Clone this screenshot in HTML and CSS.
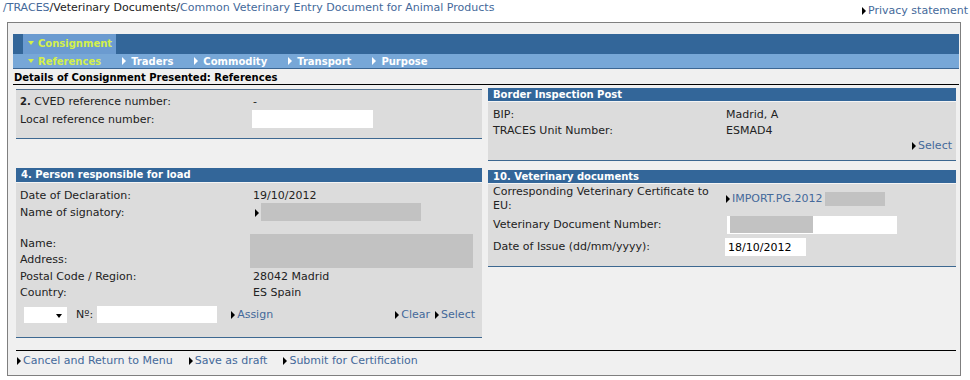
FILE: index.html
```html
<!DOCTYPE html>
<html lang="en">
<head>
    <meta charset="UTF-8">
    <title>Common Veterinary Entry Document for Animal Products</title>
    <link rel="stylesheet" href="styles.css">
</head>
<body>
<div class="top">
    <div class="crumbs"><a class="lnk">/TRACES</a>/Veterinary Documents/<a class="lnk">Common Veterinary Entry Document for Animal Products</a></div>
    <a class="go priv">Privacy statement</a>
</div>

<div class="frame">
    <div class="menu">
        <span class="tab"><i class="down"></i>Consignment</span>
    </div>
    <div class="submenu">
        <span class="sub on"><i class="down"></i>References</span>
        <span class="sub"><i class="right"></i>Traders</span>
        <span class="sub"><i class="right"></i>Commodity</span>
        <span class="sub"><i class="right"></i>Transport</span>
        <span class="sub"><i class="right"></i>Purpose</span>
    </div>
    <div class="title">Details of Consignment Presented: References</div>

    <div class="cols">
        <div class="col">
            <div class="panel refs">
                <div class="body">
                    <div class="row"><span class="lbl"><b>2.</b> CVED reference number:</span><span class="val">-</span></div>
                    <div class="row"><span class="lbl">Local reference number:</span><span class="val"><span class="inp w120"></span></span></div>
                </div>
            </div>

            <div class="panel person">
                <div class="head">4. Person responsible for load</div>
                <div class="body">
                    <div class="row"><span class="lbl">Date of Declaration:</span><span class="val">19/10/2012</span></div>
                    <div class="row sig"><span class="lbl">Name of signatory:</span><span class="val"><a class="go"></a><span class="blur w160"></span></span></div>
                    <div class="pair">
                        <div class="lbls">
                            <div class="row"><span class="lbl">Name:</span></div>
                            <div class="row"><span class="lbl">Address:</span></div>
                        </div>
                        <span class="blur addr"></span>
                    </div>
                    <div class="row"><span class="lbl">Postal Code / Region:</span><span class="val">28042 Madrid</span></div>
                    <div class="row"><span class="lbl">Country:</span><span class="val">ES Spain</span></div>
                    <div class="tools">
                        <span class="select"><i class="caret"></i></span>
                        <span class="no">Nº:</span>
                        <span class="inp w120"></span>
                        <a class="go assign">Assign</a>
                        <a class="go push">Clear</a>
                        <a class="go">Select</a>
                    </div>
                </div>
            </div>
        </div>

        <div class="col">
            <div class="panel bip">
                <div class="head">Border Inspection Post</div>
                <div class="body">
                    <div class="row"><span class="lbl">BIP:</span><span class="val">Madrid, A</span></div>
                    <div class="row"><span class="lbl">TRACES Unit Number:</span><span class="val">ESMAD4</span></div>
                    <div class="row end"><a class="go">Select</a></div>
                </div>
            </div>

            <div class="panel vet">
                <div class="head">10. Veterinary documents</div>
                <div class="body">
                    <div class="row cert"><span class="lbl">Corresponding Veterinary Certificate to EU:</span><span class="val"><a class="go">IMPORT.PG.2012</a><span class="blur w60"></span></span></div>
                    <div class="row"><span class="lbl">Veterinary Document Number:</span><span class="val"><span class="inp w170"><span class="blur w84"></span></span></span></div>
                    <div class="row"><span class="lbl">Date of Issue (dd/mm/yyyy):</span><span class="val"><span class="inp w81">18/10/2012</span></span></div>
                </div>
            </div>
        </div>
    </div>

    <div class="foot">
        <a class="go">Cancel and Return to Menu</a>
        <a class="go">Save as draft</a>
        <a class="go">Submit for Certification</a>
    </div>
</div>
</body>
</html>
```

FILE: styles.css
```css
* {
    box-sizing: border-box;
}

body {
    margin: 0;
    background: #fff;
    color: #222;
    font: 11px "DejaVu Sans", Verdana, sans-serif;
}

b {
    font-size: 10px;
}

.lnk,
.go {
    color: #44699a;
    text-decoration: none;
}

/* small black arrow in front of every action link */
.go::before {
    content: "";
    display: inline-block;
    border-left: 4px solid #000;
    border-top: 4px solid transparent;
    border-bottom: 4px solid transparent;
    margin-right: 2px;
    vertical-align: -1px;
}

.top {
    display: flex;
    justify-content: space-between;
    height: 22px;
}

.crumbs {
    padding: 1px 0 0 3px;
    line-height: 14px;
}

.priv {
    padding: 4px 2px 0 0;
    line-height: 14px;
}

.frame {
    margin-left: 7px;
    width: 954px;
    height: 354px;
    padding: 11px 0 0 5px;
    border: 1px solid #7f7f7f;
    background: #f0f0f0;
}

.menu {
    width: 946px;
    height: 20px;
    padding-left: 10px;
    background: #336699;
    display: flex;
}

.tab {
    width: 93px;
    padding-left: 5px;
    line-height: 20px;
    background: #6b9bd0;
    color: #d4f04a;
    font-size: 10px;
    font-weight: bold;
    white-space: nowrap;
}

.down {
    display: inline-block;
    border-top: 4px solid currentColor;
    border-left: 3px solid transparent;
    border-right: 3px solid transparent;
    margin-right: 4px;
    vertical-align: 2px;
}

.right {
    display: inline-block;
    border-left: 4px solid #fff;
    border-top: 4px solid transparent;
    border-bottom: 4px solid transparent;
    margin-right: 5px;
    vertical-align: 0;
}

.submenu {
    width: 946px;
    height: 15px;
    padding-left: 15px;
    background: #77a7d7;
    border-bottom: 1px solid #3b6693;
    display: flex;
    gap: 21px;
    line-height: 15px;
    color: #fff;
    font-size: 10px;
    font-weight: bold;
    white-space: nowrap;
}

.sub.on {
    color: #d4f04a;
}

.title {
    width: 946px;
    padding: 1px 0 0 1px;
    height: 16px;
    line-height: 15px;
    border-bottom: 1px solid #000;
    color: #000;
    font-size: 10px;
    font-weight: bold;
}

.cols {
    display: flex;
    gap: 6px;
    margin: 3px 0 0 3px;
}

.col {
    display: flex;
    flex-direction: column;
}

.col:first-child {
    width: 466px;
}

.col:last-child {
    width: 468px;
}

.panel {
    background: #dcdcdc;
    border-bottom: 1px solid #3d6891;
}

.head {
    height: 14px;
    line-height: 14px;
    padding-left: 5px;
    background: #336699;
    border-bottom: 1px solid #f4f4f4;
    color: #fff;
    font-size: 10px;
    font-weight: bold;
}

.body {
    padding: 3px 4px 0;
}

.row {
    display: flex;
    align-items: center;
    min-height: 16px;
}

.lbl {
    width: 233px;
    flex: none;
}

.val {
    display: flex;
    align-items: center;
}

.inp {
    display: inline-block;
    height: 18px;
    padding: 2px 3px;
    background: #fff;
    line-height: 15px;
    color: #000;
}

.w120 { width: 121px; }
.w170 { width: 170px; }
.w81 { width: 81px; }

.blur {
    display: inline-block;
    height: 18px;
    background: #c2c2c2;
}

.w160 { width: 160px; }
.w84 { width: 83px; height: 17px; }
.w60 { width: 60px; height: 14px; margin-left: 3px; }

/* 2. references */
.refs {
    height: 50px;
    margin-top: 1px;
    border-top: 1px solid #52708f;
}

.refs .row + .row {
    margin-top: 1px;
    height: 18px;
}

.refs .inp {
    margin-left: -1px;
}

/* 4. person responsible */
.person {
    height: 170px;
    margin-top: 29px;
}

.person .head {
    height: 15px;
}

.person .body {
    padding-top: 4px;
}

.sig .val {
    margin-left: 2px;
    height: 18px;
}

.pair {
    display: flex;
    margin-top: 13px;
    height: 34px;
}

.pair .lbls {
    padding-top: 1px;
}

.addr {
    width: 223px;
    height: 34px;
    margin-left: -3px;
}

.tools {
    display: flex;
    align-items: center;
    margin-top: 6px;
    padding: 0 3px 0 4px;
}

.select {
    position: relative;
    width: 43px;
    height: 16px;
    background: #fff;
}

.caret {
    position: absolute;
    right: 5px;
    top: 7px;
    border-top: 4px solid #000;
    border-left: 3px solid transparent;
    border-right: 3px solid transparent;
}

.no {
    margin: 0 4px 0 9px;
}

.tools .inp {
    height: 17px;
    width: 120px;
}

.assign {
    margin-left: 14px;
}

.push {
    margin-left: auto;
    margin-right: 5px;
}

/* border inspection post */
.bip {
    height: 73px;
}

.bip .head {
    height: 14px;
}

.bip .body {
    padding: 4px 4px 0 5px;
}

.bip .end {
    margin-top: -1px;
}

.end {
    justify-content: flex-end;
}

/* 10. veterinary documents */
.vet {
    height: 97px;
    margin-top: 9px;
}

.vet .body {
    padding: 1px 4px 0 5px;
}

.cert {
    line-height: 14px;
    padding-bottom: 2px;
}

.cert .lbl {
    padding-right: 10px;
}

.vet .row + .row {
    margin-top: 0;
    height: 19px;
}

.vet .row + .row + .row {
    margin-top: 3px;
}

.vet .inp {
    margin-left: 1px;
}

.vet .inp.w81 {
    margin-left: -1px;
}

.vet .blur.w84 {
    margin: -2px 0 0 0;
}

.foot {
    width: 940px;
    margin: 12px 0 0 3px;
    padding: 3px 0 0 1px;
    border-top: 1px solid #000;
    line-height: 14px;
    display: flex;
    gap: 16px;
}
```
